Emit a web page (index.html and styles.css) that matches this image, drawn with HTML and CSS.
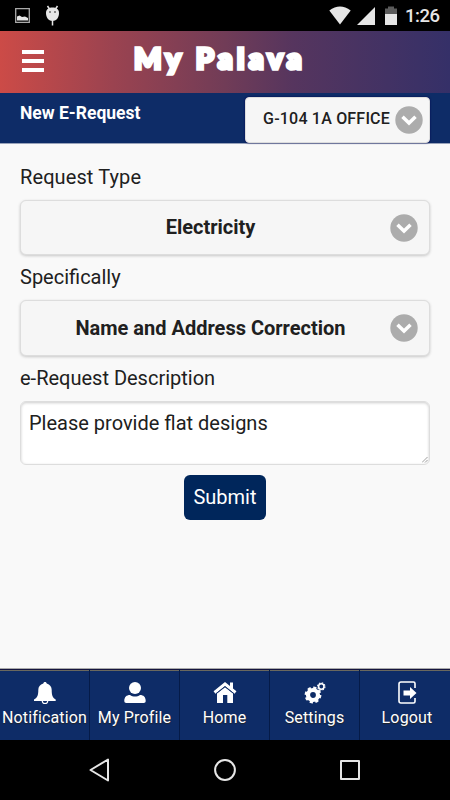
FILE: index.html
```html
<!DOCTYPE html>
<html lang="en">
<head>
<meta charset="utf-8">
<title>My Palava</title>
<link rel="stylesheet" href="styles.css">
</head>
<body>
<div class="status">
  <svg width="62" height="31" viewBox="0 0 62 31">
    <path d="M15.7 8.700h13.600v13.600H15.700z" fill="none" stroke="#aaa" stroke-width="1.300"/>
    <path d="M17 20.500v-4l2.500-1 2.500 1.500 3-.5 3 1.500v2.500z" fill="#e6e6e6"/>
    <path d="M47.500 6l2 3M57.500 6l-2 3M52.500 20v5.500" stroke="#e6e6e6" stroke-width="1.500"/>
    <path d="M46 13c0-4 3-5.500 6.500-5.500S59 9 59 13c0 5-3 8-6.500 8S46 18 46 13z" fill="#e6e6e6"/>
    <circle cx="50" cy="12" r=".8" fill="#111"/><circle cx="55" cy="12" r=".8" fill="#111"/>
  </svg>
  <div class="status-right">
    <svg width="70" height="31" viewBox="0 0 70 31">
      <path d="M1.300 10.500Q12 2.500 22.700 10.500L12 24.500z" fill="#e6e6e6"/>
      <path d="M47 7v18H29z" fill="#e6e6e6"/>
      <path d="M57 8.500h3v-2h6v2h3V14H57z" fill="#5b5b5b"/>
      <path d="M57 14h12v11H57z" fill="#e6e6e6"/>
    </svg>
    <span class="clock">1:26</span>
  </div>
</div>
<header class="brand">
  <div class="menu"><i></i><i></i><i></i></div>
  <h1>My Palava</h1>
</header>
<div class="subbar">
  <h2>New E-Request</h2>
  <div class="unit"><span>G-104 1A OFFICE</span>
    <svg class="chev" viewBox="0 0 28 28"><circle cx="14" cy="14" r="13.700" fill="#acacac"/><path d="M7.500 10.800l6.500 6.300 6.500-6.300" fill="none" stroke="#fff" stroke-width="3.500"/></svg>
  </div>
</div>
<main>
  <label class="l1">Request Type</label>
  <div class="select s1"><span>Electricity</span>
    <svg class="chev" viewBox="0 0 28 28"><circle cx="14" cy="14" r="13.700" fill="#acacac"/><path d="M7.500 10.800l6.500 6.300 6.500-6.300" fill="none" stroke="#fff" stroke-width="3.500"/></svg>
  </div>
  <label class="l2">Specifically</label>
  <div class="select s2"><span>Name and Address Correction</span>
    <svg class="chev" viewBox="0 0 28 28"><circle cx="14" cy="14" r="13.700" fill="#acacac"/><path d="M7.500 10.800l6.500 6.300 6.500-6.300" fill="none" stroke="#fff" stroke-width="3.500"/></svg>
  </div>
  <label class="l3">e-Request Description</label>
  <div class="area"><span>Please provide flat designs</span>
    <svg class="grip" width="6" height="6" viewBox="0 0 6 6"><path d="M0 5.500L5.500 0M3 5.500L5.500 3" stroke="#888" stroke-width=".8"/></svg>
  </div>
  <button>Submit</button>
</main>
<nav class="tabs">
  <a><svg viewBox="0 0 24 24"><path d="M12 1c1 0 1.600.7 1.700 1.500C17 3.500 18.700 6 18.700 9c0 5 .8 7.500 4 9.500v1.500H1v-1.500C4.500 16.500 5.300 14 5.300 9c0-3 1.700-5.500 5-6.500C10.400 1.700 11 1 12 1z" fill="#fff"/><path d="M9.300 20a2.700 2.500 0 0 0 5.400 0" fill="none" stroke="#fff" stroke-width="1.200"/></svg><span>Notification</span></a>
  <a><svg viewBox="0 0 24 24"><circle cx="12" cy="7" r="6" fill="#fff"/><path d="M1.300 20c0-4 2.200-6 5.700-6 3 2 7 2 10 0 3.500 0 5.700 2 5.700 6 0 1.300-.7 2-2 2H3.300c-1.300 0-2-.7-2-2z" fill="#fff"/></svg><span>My Profile</span></a>
  <a><svg viewBox="0 0 24 24"><path d="M1.500 11.500L12 3l10.500 8.500" fill="none" stroke="#fff" stroke-width="3"/><path d="M17 1.500h3v7l-3-2.500z" fill="#fff"/><path d="M4 12.500L12 6.300l8 6.200V22h-5.700v-8H10v8H4z" fill="#fff"/><path d="M3 12.700L12 5.600l9 7.100" fill="none" stroke="#0e2c67" stroke-width=".8"/></svg><span>Home</span></a>
  <a><svg viewBox="0 0 24 24"><circle cx="10" cy="14" r="5" fill="none" stroke="#fff" stroke-width="4.200"/><circle cx="10" cy="14" r="7.200" fill="none" stroke="#fff" stroke-width="2.400" stroke-dasharray="3.200 2.455"/><circle cx="18.300" cy="5.500" r="2.700" fill="none" stroke="#fff" stroke-width="1.600"/><circle cx="18.300" cy="5.500" r="3.700" fill="none" stroke="#fff" stroke-width="1.100" stroke-dasharray="1.500 1.400"/></svg><span>Settings</span></a>
  <a><svg viewBox="0 0 24 24"><path d="M20 7V2.500Q20 1 18.500 1H6Q4 1 4 3v17q0 2 2 2h12.500q1.500 0 1.500-1.500V17" fill="none" stroke="#fff" stroke-width="1.600"/><path d="M8.500 9.500H15V6l6.500 6-6.500 6v-3.500H8.500z" fill="#fff"/></svg><span>Logout</span></a>
</nav>
<div class="android">
  <svg width="22" height="24" viewBox="0 0 22 24"><path d="M1.500 12L19 1.500v21z" fill="none" stroke="#e6e6e6" stroke-width="2" stroke-linejoin="round"/></svg>
  <svg width="22" height="24" viewBox="0 0 22 24"><circle cx="11" cy="12" r="9.900" fill="none" stroke="#e6e6e6" stroke-width="2"/></svg>
  <svg width="22" height="24" viewBox="0 0 22 24"><path d="M2 3h18v18H2z" fill="none" stroke="#e6e6e6" stroke-width="2" stroke-linejoin="round"/></svg>
</div>
</body>
</html>
```

FILE: styles.css
```css
* { box-sizing: border-box; }
body { margin: 0; width: 450px; height: 800px; overflow: hidden; display: flex; flex-direction: column; background: #f9f9f9; color: #202020; font-family: Roboto, sans-serif; }
h1, h2 { margin: 0; }
span, label, h1, h2 { white-space: nowrap; }
svg { display: block; flex: none; }
.status { height: 31px; background: #000; display: flex; justify-content: space-between; flex: none; }
.status-right { display: flex; width: 122px; }
.clock { color: #e6e6e6; font-size: 18.500px; font-weight: 500; line-height: 33px; margin-left: 7px; letter-spacing: -.5px; }
.brand { height: 62px; flex: none; background: linear-gradient(90deg, #cc4b47 0, #9b4350 25%, #713c57 50%, #56355e 65%, #353068 100%); display: flex; padding: 19px 0 0 22px; }
.menu { width: 22px; display: grid; gap: 5px; align-content: start; }
.menu i { height: 4px; background: #fff; }
.brand h1 { margin-left: 90px; margin-top: -11px; font: 900 29px/38px Lato, sans-serif; color: #fff; -webkit-text-stroke: 3.5px #fff; letter-spacing: 4.3px; }
.subbar { height: 51px; flex: none; background: #0e2c67; border-bottom: 1px solid #99a3ba; display: flex; justify-content: space-between; padding: 4px 20px 0; }
.subbar h2 { color: #fff; font-size: 17.500px; font-weight: 700; line-height: 32px; }
.unit { width: 185px; height: 46px; background: #f6f6f6; border: 1px solid #ddd; border-radius: 4px; display: flex; justify-content: flex-end; align-items: center; gap: 5px; padding-right: 6px; font-size: 16px; font-weight: 500; letter-spacing: .2px; box-shadow: 0 0 2px #00004f; }
.unit span { margin-top: -3px; }
.chev { width: 28px; height: 28px; }
main { flex: 1; padding: 18px 20px 0; display: flex; flex-direction: column; font-size: 20px; }
label { line-height: 30px; }
.l1 { letter-spacing: .1px; }
.select { flex: none; margin-top: 8px; background: #f6f6f6; border: 1px solid #ddd; border-radius: 6px; box-shadow: 0 1px 3px rgba(0,0,0,.2); display: grid; grid-template-columns: 1fr 28px; align-items: center; padding: 0 11px 0 10px; font-weight: 700; line-height: 24px; }
.select span { text-align: center; padding-bottom: 1px; }
.s1 { height: 55px; }
.s2 { height: 56px; }
.s2 span { padding-bottom: 0; }
.l2, .l3 { margin-top: 7px; }
.area { position: relative; margin-top: 8px; height: 64px; flex: none; background: #fff; border: 1px solid #ddd; border-radius: 6px; padding: 7px 8px; box-shadow: inset 0 1px 3px rgba(0,0,0,.2); line-height: 28px; }
.grip { position: absolute; right: 1px; bottom: 1px; }
button { align-self: center; margin-top: 10px; width: 82px; height: 45px; padding: 0 0 2px; flex: none; border: 0; border-radius: 6px; background: #00265b; color: #fff; font: 20px Roboto, sans-serif; }
.tabs { height: 72px; flex: none; display: grid; grid-template-columns: repeat(5, 90px); border-top: 1px solid #aaa; box-shadow: inset 0 1px #14143e, inset 0 2px #6a685e; background: #0e2c67; }
.tabs a { display: flex; flex-direction: column; align-items: center; gap: 2px; padding-top: 12px; border-right: 1px solid #051b48; color: #fff; font-size: 16px; line-height: 22px; letter-spacing: .15px; text-shadow: 0 1px 1px #222; }
.tabs a:last-child { border: 0; padding-left: 4px; }
.tabs svg { width: 24px; height: 24px; }
.android { height: 60px; flex: none; background: #000; display: flex; padding: 18px 89px 0; justify-content: space-between; }
```
